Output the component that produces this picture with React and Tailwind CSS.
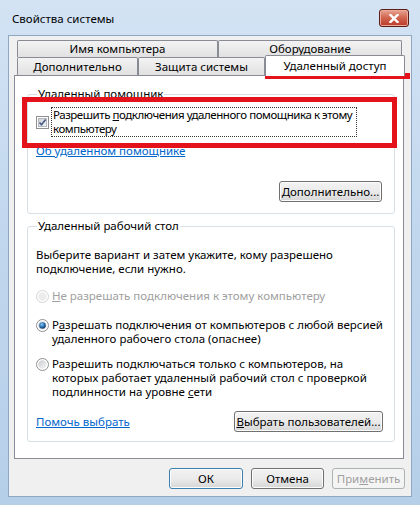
import React from 'react';

// Checkbox glyph, checked
const CheckBox = () => (
  <svg width="13" height="13" viewBox="0 0 13 13" className="shrink-0">
    <defs>
      <linearGradient id="cbfill" x1="0" y1="0" x2="1" y2="1">
        <stop offset="0" stopColor="#cbcfd5" />
        <stop offset="1" stopColor="#f6f6f6" />
      </linearGradient>
    </defs>
    <rect x="0.5" y="0.5" width="12" height="12" fill="#fff" stroke="#8f8f8f" />
    <rect x="2.5" y="2.5" width="8" height="8" fill="url(#cbfill)" stroke="#b3b8c0" />
    <path d="M3.5 6.5 L5.5 8.8 L9.6 3.4" fill="none" stroke="#4a5a86" strokeWidth="1.6" />
  </svg>
);

const Radio = ({ checked, disabled }) => (
  <svg width="13" height="13" viewBox="0 0 13 13" className="shrink-0">
    <defs>
      <radialGradient id="rdot" cx="0.4" cy="0.35" r="0.7">
        <stop offset="0" stopColor="#8fd0f6" />
        <stop offset="0.5" stopColor="#2b74b8" />
        <stop offset="1" stopColor="#12345e" />
      </radialGradient>
      <linearGradient id="rfill" x1="0" y1="0" x2="1" y2="1">
        <stop offset="0" stopColor="#c9ccd1" />
        <stop offset="1" stopColor="#f7f7f7" />
      </linearGradient>
    </defs>
    <circle cx="6.5" cy="6.5" r="6" fill="#fff" stroke={disabled ? '#d3d3d3' : '#8f8f8f'} />
    <circle cx="6.5" cy="6.5" r="4.2" fill={disabled ? '#ececec' : 'url(#rfill)'} />
    {checked && <circle cx="6.5" cy="6.5" r="3.3" fill="url(#rdot)" />}
  </svg>
);

const Button = ({ children, className = '' }) => (
  <div
    className={
      'h-[21px] flex items-center justify-center whitespace-nowrap rounded-[3px] border border-[#707070] bg-gradient-to-b from-[#f2f2f2] via-[#ebebeb] to-[#d6d6d6] shadow-[inset_0_0_0_1px_#fcfcfc] ' +
      className
    }
  >
    {children}
  </div>
);

const Tab = ({ children, className = '' }) => (
  <div
    className={
      'flex items-center justify-center border-l border-t border-r border-[#898c95] rounded-t-[2px] bg-gradient-to-b from-[#f3f3f3] to-[#e1e1e1] ' +
      className
    }
  >
    {children}
  </div>
);

export default function App() {
  return (
    <div className="relative w-[420px] h-[505px] flex flex-col bg-gradient-to-b from-[#d3e3f4] via-[#c0d6ed] to-[#b6cfe9] text-[11.5px] text-black font-['Noto_Sans','Liberation_Sans',sans-serif] whitespace-nowrap overflow-hidden">
      {/* title bar */}
      <div className="h-[35px] shrink-0 flex items-start justify-between pl-[12px] pr-[11px]">
        <span className="mt-[11px] leading-[16px]">Свойства системы</span>
        <div className="mt-[9px] w-[30px] h-[18px] rounded-[3px] border border-[#5c1d14] bg-gradient-to-b from-[#e8a493] via-[#d0634d] to-[#b8382a] flex items-center justify-center shadow-[inset_0_0_0_1px_#eca898]">
          <svg width="10" height="9" viewBox="0 0 10 9">
            <path d="M1.5 1 L8.5 8 M8.5 1 L1.5 8" stroke="#fff" strokeWidth="2.4" strokeLinecap="square" />
          </svg>
        </div>
      </div>

      {/* client area */}
      <div className="mx-[8px] h-[462px] shrink-0 bg-[#f0f0f0] border border-[#8ea8c4] flex flex-col">
        {/* tabs */}
        <div className="mt-[4px] ml-[8px] flex flex-col">
          <div className="flex h-[17px]">
            <Tab className="w-[201px]">Имя компьютера</Tab>
            <Tab className="w-[184px]">Оборудование</Tab>
          </div>
          <div className="flex h-[18px] items-end">
            <Tab className="w-[121px] h-[18px]">Дополнительно</Tab>
            <Tab className="w-[127px] h-[18px]">Защита системы</Tab>
            <div className="relative z-10 w-[140px] h-[21px] -mb-[1px] flex items-center justify-center border-l border-t border-r border-[#898c95] rounded-t-[2px] bg-white">
              Удаленный доступ
            </div>
          </div>
        </div>

        {/* panel */}
        <div className="ml-[5px] w-[390px] h-[384px] border border-[#898c95] bg-white flex flex-col pl-[12px] pr-[8px]">
          {/* group 1 */}
          <fieldset className="mt-[11px] h-[127px] border border-[#d5dfe5] rounded-[3px] flex flex-col px-[8px]">
            <legend className="ml-[1px] px-[1px] leading-[14px]">Удаленный помощник</legend>
            <div className="mt-[6px] flex items-center">
              <CheckBox />
              <div className="ml-[2px] border border-dotted border-[#333] pl-[1px] pr-[4px] tracking-[-0.45px] leading-[14px]">
                Разрешить <span className="underline">п</span>одключения удаленного помощника к этому
                <br />
                компьютеру
              </div>
            </div>
            <span className="mt-[7px] leading-[14px] text-[#0066cc] underline">Об удаленном помощнике</span>
            <div className="mt-[23px] flex justify-end pr-[4px]">
              <Button className="w-[103px]">
                <span>
                  <span className="underline">Д</span>ополнительно...
                </span>
              </Button>
            </div>
          </fieldset>

          {/* group 2 */}
          <fieldset className="mt-[5px] h-[223px] border border-[#d5dfe5] rounded-[3px] flex flex-col px-[8px]">
            <legend className="ml-[1px] px-[1px] leading-[14px]">Удаленный рабочий стол</legend>
            <p className="mt-[15px] leading-[14px]">
              Выберите вариант и затем укажите, кому разрешено
              <br />
              подключение, если нужно.
            </p>
            <div className="mt-[13px] flex items-center gap-[3px] leading-[14px] text-[#a0a0a0]">
              <Radio disabled />
              <span>
                <span className="underline">Н</span>е разрешать подключения к этому компьютеру
              </span>
            </div>
            <div className="mt-[15px] flex items-start gap-[3px] leading-[14px]">
              <div className="mt-[1px]">
                <Radio checked />
              </div>
              <span>
                Р<span className="underline">а</span>зрешать подключения от компьютеров с любой версией
                <br />
                удаленного рабочего стола (опаснее)
              </span>
            </div>
            <div className="mt-[11px] flex items-start gap-[3px] leading-[14px]">
              <div className="mt-[1px]">
                <Radio />
              </div>
              <span>
                Разрешить подключаться только с компьютеров, на
                <br />
                которых работает удаленный рабочий стол с проверкой
                <br />
                подлинности на уровне <span className="underline">с</span>ети
              </span>
            </div>
            <div className="mt-[12px] flex items-center justify-between pr-[3px]">
              <span className="text-[#0066cc] underline leading-[14px]">Помочь выбрать</span>
              <Button className="w-[149px] h-[20px]">
                <span>
                  <span className="underline">В</span>ыбрать пользователей...
                </span>
              </Button>
            </div>
          </fieldset>
        </div>

        {/* dialog buttons */}
        <div className="mt-[9px] flex justify-end gap-[8px] pr-[6px]">
          <Button className="w-[74px] !border-[#3c7fb1] shadow-[inset_0_0_0_1px_#a6d4f2]">ОК</Button>
          <Button className="w-[73px]">Отмена</Button>
          <div className="w-[73px] h-[21px] flex items-center justify-center rounded-[3px] border border-[#adb2b5] bg-[#f4f4f4] text-[#a0a0a0]">
            При<span className="underline">м</span>енить
          </div>
        </div>
      </div>

      {/* red annotations */}
      <div className="absolute left-[265px] top-[73px] w-[145px] h-[6px] bg-[#e3121b]" />
      <div className="absolute left-[22px] top-[97px] w-[375px] h-[51px] border-[5px] border-[#e3121b]" />
    </div>
  );
}
